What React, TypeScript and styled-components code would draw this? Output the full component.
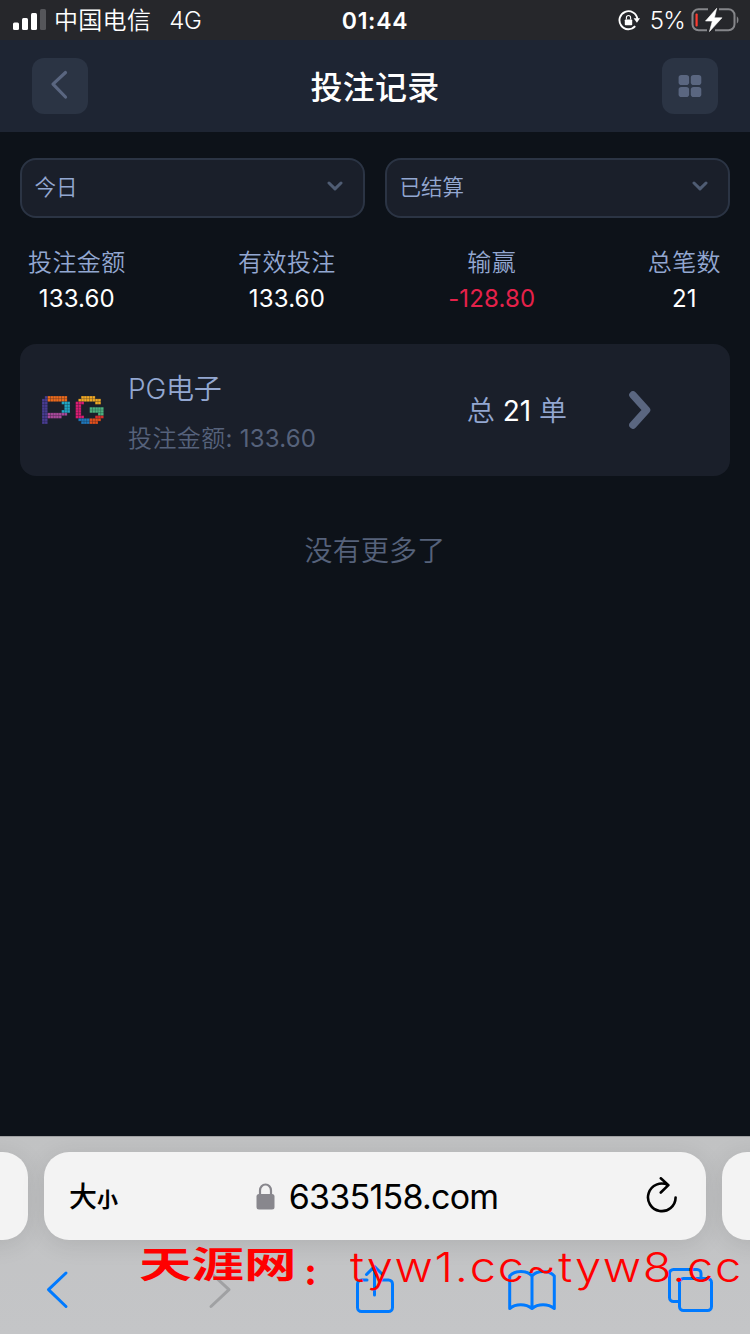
import React from "react";
import styled, { createGlobalStyle } from "styled-components";

const Global = createGlobalStyle`
  * { box-sizing: border-box; }
  body { margin: 0; background: #0d1219; }
`;

const Screen = styled.div`
  width: 750px;
  height: 1334px;
  display: flex;
  flex-direction: column;
  overflow: hidden;
  background: #0d1219;
  color: #fff;
  font-family: Inter, "Noto Sans CJK SC", sans-serif;
  font-weight: 350;
  white-space: nowrap;
`;

const StatusBar = styled.div`
  height: 40px;
  flex: none;
  display: grid;
  grid-template-columns: 1fr auto 1fr;
  align-items: center;
  padding: 0 11px 0 13px;
  background: #26272b;
  font-size: 24px;
  line-height: 38px;
`;

const StatusGroup = styled.div<{ $end?: boolean }>`
  display: flex;
  align-items: center;
  justify-content: ${(p) => (p.$end ? "flex-end" : "flex-start")};
`;

const Carrier = styled.span`
  margin: 2px 0 0 8px;
  letter-spacing: 0.3px;
`;
const Network = styled.span`
  margin: 2px 0 0 18px;
  letter-spacing: -0.3px;
`;
const Clock = styled.span`
  padding-top: 2px;
  font-size: 23px;
  font-weight: 600;
  letter-spacing: 0.7px;
  transform: translateX(-1px);
`;
const Percent = styled.span`
  margin: 2px 6px 0 10px;
  font-size: 24px;
  letter-spacing: -0.8px;
`;

const Header = styled.header`
  height: 92px;
  flex: none;
  display: flex;
  align-items: center;
  justify-content: space-between;
  padding: 0 32px;
  background: #1e2533;
`;

const SquareButton = styled.button`
  width: 56px;
  height: 56px;
  padding: 0;
  border: 0;
  border-radius: 12px;
  background: #2b3444;
  display: flex;
  align-items: center;
  justify-content: center;
`;

const Title = styled.h1`
  margin: 4px 0 0;
  font-size: 32px;
  font-weight: 500;
  line-height: 48px;
  letter-spacing: 0.3px;
`;

const Filters = styled.div`
  display: flex;
  gap: 20px;
  padding: 26px 20px 0;
`;

const Select = styled.div`
  flex: 1;
  height: 60px;
  display: flex;
  align-items: center;
  justify-content: space-between;
  padding: 0 20px 4px 12px;
  border: 2px solid #2b3444;
  border-radius: 16px;
  background: #1a1f2a;
  color: #93a7d1;
  font-size: 21.5px;
  line-height: 30px;
`;

const SelectText = styled.span`
  padding: 2px 0 0 0.5px;
`;

const Stats = styled.div`
  display: flex;
  justify-content: space-between;
  padding: 26px 29px 0 28px;
`;

const Stat = styled.div`
  display: flex;
  flex-direction: column;
  align-items: center;
`;

const StatLabel = styled.span`
  padding-top: 1px;
  color: #93a7d1;
  font-size: 24px;
  line-height: 35px;
  letter-spacing: 0.4px;
`;

const StatValue = styled.span<{ $loss?: boolean }>`
  padding-top: 1px;
  color: ${(p) => (p.$loss ? "#e5214a" : "#fff")};
  font-size: 24px;
  font-weight: 400;
  line-height: 35px;
  letter-spacing: 0.15px;
`;

const Card = styled.div`
  height: 132px;
  margin: 28px 20px 0;
  padding: 0 79px 0 22px;
  display: flex;
  align-items: center;
  border-radius: 16px;
  background: #1a1f2a;
`;

const CardBody = styled.div`
  flex: 1;
  margin-left: 24px;
`;

const CardTitle = styled.div`
  color: #93a7d1;
  font-size: 28px;
  line-height: 42px;
  margin-top: 5px;
  letter-spacing: -0.2px;
`;

const CardSub = styled.div`
  margin-top: 10px;
  color: #56627b;
  font-size: 24px;
  line-height: 38px;
  letter-spacing: 0.4px;
`;

const Latin = styled.span`
  font-weight: 400;
  letter-spacing: 0.2px;
`;

const Orders = styled.div`
  margin: -3px 62px 0 0;
  color: #93a7d1;
  font-size: 28px;
`;

const OrderCount = styled.span`
  color: #fff;
  font-weight: 400;
`;

const EndNote = styled.div`
  margin-top: 54px;
  text-align: center;
  color: #56627b;
  font-size: 28px;
  line-height: 42px;
  letter-spacing: 0.2px;
  flex: 1;
`;

const Browser = styled.footer`
  position: relative;
  height: 198px;
  flex: none;
  overflow: hidden;
  border-top: 1px solid #9fa0a2;
  background: linear-gradient(#c1c2c3, #c4c5c7);
  color: #000;
`;

const TabStrip = styled.div`
  display: flex;
  gap: 16px;
  margin: 15px -60px 0;
`;

const Tab = styled.div<{ $side?: boolean }>`
  width: ${(p) => (p.$side ? "88px" : "auto")};
  flex: ${(p) => (p.$side ? "none" : "1")};
  height: 88px;
  border-radius: 25px;
  background: #f3f3f3;
  box-shadow: 0 4px 24px rgba(0, 0, 0, 0.1);
  display: grid;
  grid-template-columns: 1fr auto 1fr;
  align-items: center;
  padding: ${(p) => (p.$side ? "0" : "0 28px 0 25px")};
`;

const TextSize = styled.span`
  padding-top: 5px;
  font-size: 28px;
  font-weight: 500;
  line-height: 40px;
`;
const SmallGlyph = styled.span`
  font-size: 21px;
  font-weight: 700;
`;

const Address = styled.span`
  display: flex;
  align-items: center;
  gap: 14px;
  margin-left: 7px;
  font-size: 34px;
  font-weight: 400;
  letter-spacing: -0.75px;
`;

const Reload = styled.span`
  justify-self: end;
  display: flex;
`;

const Toolbar = styled.nav`
  display: grid;
  grid-template-columns: repeat(5, 158px);
  justify-items: center;
  align-items: start;
  margin-left: -21px;
  padding-top: 24px;
`;

const Watermark = styled.div`
  position: absolute;
  left: 139px;
  top: 100px;
  height: 60px;
  color: #ff0000;
`;

const MarkName = styled.span`
  position: absolute;
  left: 0;
  top: 0;
  font-family: "Noto Sans CJK SC", sans-serif;
  font-size: 36px;
  font-weight: 700;
  line-height: 50px;
  transform: scaleX(1.46);
  transform-origin: left;
`;

const MarkColon = styled.span`
  position: absolute;
  left: 165px;
  top: 10px;
  font-family: "Liberation Serif", serif;
  font-size: 40px;
  font-weight: 700;
  line-height: 50px;
`;

const MarkUrl = styled.span`
  position: absolute;
  left: 211px;
  top: 5px;
  font-family: Inter, sans-serif;
  font-size: 41px;
  font-weight: 300;
  line-height: 50px;
  letter-spacing: 1.5px;
  transform: scaleX(1.146);
  transform-origin: left;
`;

const logoColors: Record<string, string> = {
  v: "#493c92",
  o: "#ee6b1b",
  t: "#20a6c4",
  m: "#a8499a",
  y: "#f2aa24",
  p: "#da1c72",
  g: "#4db380",
  r: "#dc2d2b",
  b: "#1f78bd",
  d: "#e6501b",
};

const logoRows = [
  ".vooooooo.....yyyyy...",
  "vvooooooo....yyyyyyyy.",
  "vv.....ttt..ppp....yy.",
  "vv......tt..pp........",
  "vv......tt..pp...ggggg",
  "vv.....ttt..pp...ggggg",
  "vvmmmmmmm...pp......gg",
  "vvmmmmm.....ppp....rrr",
  "vv...........bbbbdddd.",
  "vv............bbbddd..",
];

const Logo = () => (
  <svg width="62" height="28" viewBox="0 0 62 28">
    {logoRows.flatMap((row, y) =>
      row.split("").map((c, x) =>
        c === "." ? null : (
          <g key={`${x}-${y}`} fill={logoColors[c]}>
            <rect x={x * 2.8} y={y * 2.8} width="2.8" height="2.8" opacity="0.55" />
            <rect x={x * 2.8 + 0.3} y={y * 2.8 + 0.3} width="2.2" height="2.2" />
          </g>
        )
      )
    )}
  </svg>
);

const Signal = () => (
  <svg width="33" height="22" viewBox="0 0 33 22" fill="#fff">
    <rect x="0" y="13.5" width="6" height="7.5" rx="1.5" />
    <rect x="9" y="9" width="6" height="12" rx="1.5" />
    <rect x="18" y="4" width="6" height="17" rx="1.5" />
    <rect x="27" y="0" width="6" height="21" rx="1.5" fill="#55565a" />
  </svg>
);

const RotationLock = () => (
  <svg width="22" height="22" viewBox="0 0 22 22">
    <path d="M17.2 17.2A9 9 0 1 1 19.4 10" fill="none" stroke="#fff" strokeWidth="1.9" />
    <path d="M15.6 9.2h6.400l-3.100 4.500z" fill="#fff" />
    <rect x="6.8" y="10.4" width="7.4" height="5.8" rx="0.8" fill="#fff" />
    <path d="M8.400 10.600V8.600a2.100 2.100 0 0 1 4.200 0V10.600" fill="none" stroke="#fff" strokeWidth="1.1" />
  </svg>
);

const Battery = () => (
  <svg width="48" height="24" viewBox="0 0 48 24">
    <path d="M17 1.300H7.500a6 6 0 0 0-6 6v9a6 6 0 0 0 6 6H16M28 1.300h9.500a6 6 0 0 1 6 6v9a6 6 0 0 1-6 6H24" fill="none" stroke="#85868a" strokeWidth="2" />
    <path d="M45.800 8.200c2.200 1.300 2.200 6 0 7.400z" fill="#85868a" />
    <rect x="4.5" y="5.5" width="2.2" height="13" rx="1" fill="#fd3b30" />
    <path d="M25.700.300 14.500 13h6.800l-2.800 10.500L31 9.800h-7.600z" fill="#fff" stroke="#fff" strokeWidth=".6" strokeLinejoin="round" />
  </svg>
);

const Chevron = () => (
  <svg width="16" height="10" viewBox="0 0 16 10">
    <path d="m2 2 6 5.800L14 2" fill="none" stroke="#4f5c73" strokeWidth="3" strokeLinecap="round" strokeLinejoin="round" />
  </svg>
);

const filters = ["今日", "已结算"];

const stats = [
  { label: "投注金额", value: "133.60" },
  { label: "有效投注", value: "133.60" },
  { label: "输赢", value: "-128.80", loss: true },
  { label: "总笔数", value: "21" },
];

export default function App() {
  return (
    <>
      <Global />
      <Screen>
        <StatusBar>
          <StatusGroup>
            <Signal />
            <Carrier>中国电信</Carrier>
            <Network>4G</Network>
          </StatusGroup>
          <Clock>01:44</Clock>
          <StatusGroup $end>
            <RotationLock />
            <Percent>5%</Percent>
            <Battery />
          </StatusGroup>
        </StatusBar>

        <Header>
          <SquareButton>
            <svg width="20" height="32" viewBox="0 0 20 32">
              <path d="M15.500 2.500 3 14.200 15.500 27" fill="none" stroke="#5a6680" strokeWidth="3.2" strokeLinecap="round" strokeLinejoin="round" />
            </svg>
          </SquareButton>
          <Title>投注记录</Title>
          <SquareButton>
            <svg width="24" height="24" viewBox="0 0 24 24" fill="#5a6680">
              <rect x="0.6" y="0.9" width="10.5" height="10.2" rx="2.8" />
              <rect x="12.8" y="0.9" width="10.5" height="10.2" rx="2.8" />
              <rect x="0.6" y="12.9" width="10.5" height="10.2" rx="2.8" />
              <rect x="12.8" y="12.9" width="10.5" height="10.2" rx="2.8" />
            </svg>
          </SquareButton>
        </Header>

        <Filters>
          {filters.map((f) => (
            <Select key={f}>
              <SelectText>{f}</SelectText>
              <Chevron />
            </Select>
          ))}
        </Filters>

        <Stats>
          {stats.map((s) => (
            <Stat key={s.label}>
              <StatLabel>{s.label}</StatLabel>
              <StatValue $loss={s.loss}>{s.value}</StatValue>
            </Stat>
          ))}
        </Stats>

        <Card>
          <Logo />
          <CardBody>
            <CardTitle>PG电子</CardTitle>
            <CardSub>投注金额<Latin>: 133.60</Latin></CardSub>
          </CardBody>
          <Orders>总 <OrderCount>21</OrderCount> 单</Orders>
          <svg width="22" height="38" viewBox="0 0 22 38">
            <path d="M4 4 17.500 19 4 34" fill="none" stroke="#5a6680" strokeWidth="7.6" strokeLinecap="round" strokeLinejoin="round" />
          </svg>
        </Card>

        <EndNote>没有更多了</EndNote>

        <Browser>
          <TabStrip>
            <Tab $side />
            <Tab>
              <TextSize>大<SmallGlyph>小</SmallGlyph></TextSize>
              <Address>
                <svg width="19" height="27" viewBox="0 0 19 27">
                  <rect x="0.5" y="11" width="18" height="15.5" rx="2.5" fill="#88878d" />
                  <path d="M4 12V7.500a5.500 6 0 0 1 11 0V12" fill="none" stroke="#88878d" strokeWidth="2.2" />
                </svg>
                6335158.com
              </Address>
              <Reload>
                <svg width="32" height="38" viewBox="0 0 32 38" fill="none" stroke="#000" strokeWidth="2.6" strokeLinecap="round" strokeLinejoin="round">
                  <path d="M29.600 20.500A13.800 13.800 0 1 1 22 8M14.800 1.300l7.600 6.800-7.600 7.400" />
                </svg>
              </Reload>
            </Tab>
            <Tab $side />
          </TabStrip>

          <Toolbar>
            <svg width="26" height="48" viewBox="0 0 26 48">
              <path d="M21 9 3.500 25.700 21 42.500" fill="none" stroke="#007aff" strokeWidth="3" strokeLinecap="round" strokeLinejoin="round" />
            </svg>
            <svg width="32" height="48" viewBox="0 0 32 48">
              <path d="M11 9 29 25.700 11 42.500" fill="none" stroke="#a0a1a3" strokeWidth="3" strokeLinecap="round" strokeLinejoin="round" />
            </svg>
            <svg width="40" height="52" viewBox="0 0 40 52" fill="none" stroke="#007aff" strokeWidth="3" strokeLinecap="round" strokeLinejoin="round">
              <path d="M13 16H7.500a4 4 0 0 0-4 4v23.500a4 4 0 0 0 4 4h27a4 4 0 0 0 4-4V20a4 4 0 0 0-4-4H28M20.500 31V3M12.500 10.500l8-8 8 8" />
            </svg>
            <svg width="48" height="48" viewBox="0 0 48 48" fill="none" stroke="#007aff" strokeWidth="3" strokeLinejoin="round">
              <path d="M24 12C19 6 7 6 1.700 12v32.500c6-5 16-5 22.300 0 6-5 16-5 22.300 0V12C41 6 29 6 24 12v32.500" />
            </svg>
            <svg width="46" height="52" viewBox="0 0 46 52" fill="none" stroke="#007aff" strokeWidth="3" strokeLinejoin="round">
              <rect x="12.500" y="14.500" width="32" height="32" rx="4" />
              <path d="M12.500 37.500H6.500a4 4 0 0 1-4-4V9.500a4 4 0 0 1 4-4H30a4 4 0 0 1 4 4v5" />
            </svg>
          </Toolbar>

          <Watermark>
            <MarkName>天涯网</MarkName>
            <MarkColon>:</MarkColon>
            <MarkUrl>tyw1.cc~tyw8.cc</MarkUrl>
          </Watermark>
        </Browser>
      </Screen>
    </>
  );
}
